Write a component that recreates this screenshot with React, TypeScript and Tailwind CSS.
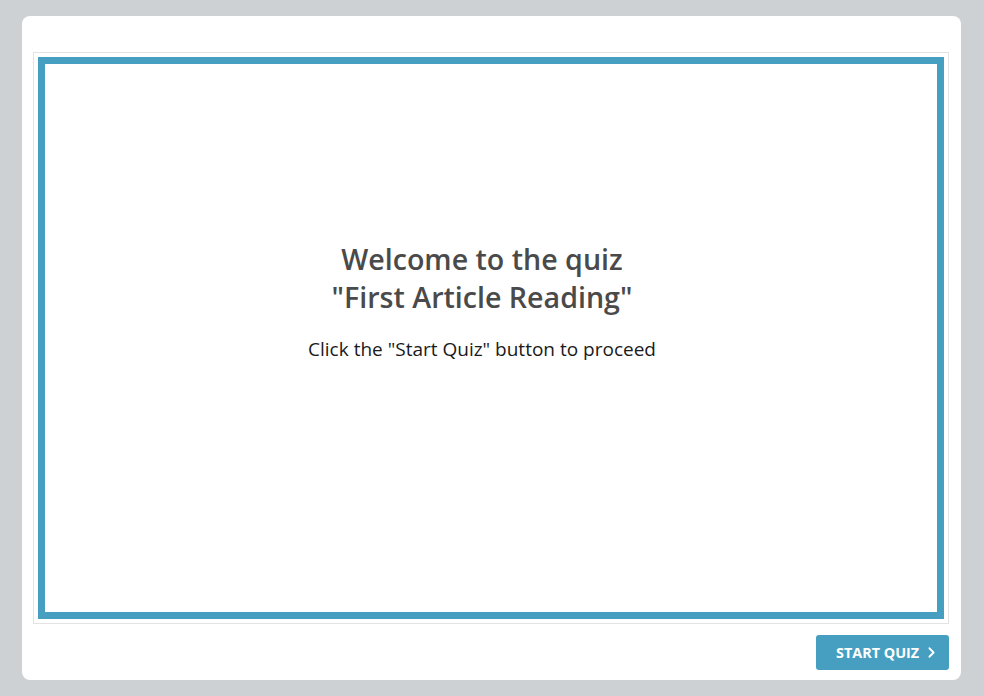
import { ChevronRight } from "lucide-react";

const font = { fontFamily: '"Open Sans", "Noto Sans", sans-serif' };

export default function App() {
  return (
    <div className="min-h-[696px] bg-[#ced1d4] pt-4 pl-[22px] pr-[23px]" style={font}>
      <div className="h-[664px] rounded-lg bg-white pt-9 pl-[11px] pr-3">
        {/* quiz frame */}
        <div className="flex h-[572px] border border-[#e3e3e3] p-1">
          <div className="flex flex-1 flex-col items-center border-[7px] border-[#469fc1] pt-[176px] pr-[18px]">
            <h1 className="text-center text-[28.6px] font-semibold leading-[38px] text-[#4a4a4a]">
              Welcome to the quiz
              <br />
              "First Article Reading"
            </h1>
            <p className="mt-[19px] text-[19px] text-[#1a1a1a]">
              Click the "Start Quiz" button to proceed
            </p>
          </div>
        </div>

        <div className="mt-[11px] flex justify-end">
          <button className="flex h-[35px] w-[133px] items-center gap-1 rounded-[3px] bg-[#469fc1] pl-5 text-[14.4px] font-bold text-white">
            START QUIZ
            <ChevronRight size={17} strokeWidth={2.5} />
          </button>
        </div>
      </div>
    </div>
  );
}
